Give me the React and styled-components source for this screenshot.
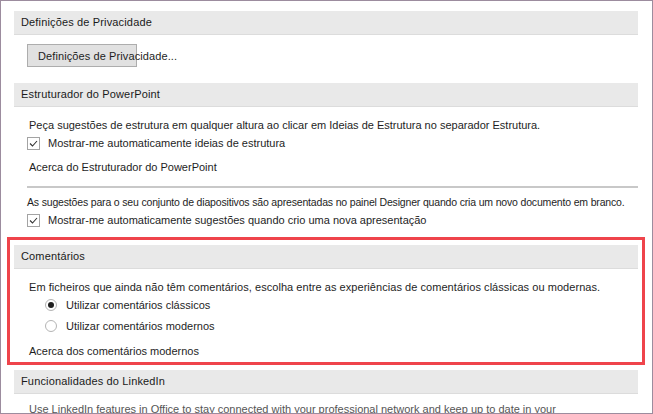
import React from 'react'
import styled, { createGlobalStyle } from 'styled-components'

const GlobalStyle = createGlobalStyle`
    html, body {
        margin: 0;
        padding: 0;
        background: #ffffff;
    }
    body {
        font-family: "Liberation Sans", Arial, sans-serif;
        font-size: 11px;
        color: #1e1e1e;
    }
`

const Window = styled.div`
    box-sizing: border-box;
    width: 653px;
    height: 414px;
    border: 1px solid #9c8c9e;
    background: #ffffff;
    overflow: hidden;
    padding: 10px 14px 0 13px;
`

// Section headers

const SectionHeader = styled.div`
    height: 23px;
    line-height: 23px;
    padding-left: 7px;
    background: #e9e9e9;
    border-bottom: 1px solid #dcdcdc;
    color: #1a1a1a;
    letter-spacing: 0.15px;
    white-space: nowrap;
`

const Body = styled.div`
    display: flex;
    flex-direction: column;
    align-items: flex-start;
    padding: ${ ({ $top }) => $top ?? 9 }px 0 0 ${ ({ $indent }) => $indent ?? 15 }px;
`

const Line = styled.div`
    height: 18px;
    line-height: 18px;
    white-space: nowrap;
    margin-top: ${ ({ $gap }) => $gap || 0 }px;
    letter-spacing: ${ ({ $spread }) => $spread || 0 }px;
    color: ${ ({ $muted }) => $muted ? '#555555' : '#1e1e1e' };
`

const SmallLine = styled(Line)`
    font-size: 10.5px;
    letter-spacing: -0.17px;
    margin-left: -2px;
`

// Button

const PushButton = styled.button`
    box-sizing: border-box;
    width: 110px;
    height: 23px;
    padding: 0 0 0 10px;
    margin: 0 0 16px -2px;
    background: #e1e1e1;
    border: 1px solid #adadad;
    font: inherit;
    letter-spacing: 0.1px;
    color: #1e1e1e;
    text-align: left;
    white-space: nowrap;
    overflow: visible;
`

// Checkboxes and radios

const OptionRow = styled.label`
    display: flex;
    align-items: center;
    height: 18px;
    margin-top: ${ ({ $gap }) => $gap || 0 }px;
    margin-left: ${ ({ $shift }) => $shift || 0 }px;
    white-space: nowrap;
    gap: ${ ({ $space }) => $space || 8 }px;
`

const Box = styled.span`
    box-sizing: border-box;
    width: 13px;
    height: 13px;
    border: 1px solid #a3a3a3;
    background: #ffffff;
    display: flex;
    align-items: center;
    justify-content: center;
`

const Radio = styled.span`
    box-sizing: border-box;
    width: 12px;
    height: 12px;
    border-radius: 50%;
    border: 1px solid #b4b4b4;
    background: #ffffff;
    display: flex;
    align-items: center;
    justify-content: center;
    &::after {
        content: '';
        width: 6px;
        height: 6px;
        border-radius: 50%;
        background: ${ ({ $checked }) => $checked ? '#1f1f1f' : 'transparent' };
    }
`

const Separator = styled.div`
    align-self: stretch;
    height: 2px;
    background: #c8c8c8;
    margin: 10px 0 5px -2px;
`

const Highlight = styled.div`
    box-sizing: border-box;
    margin: 8px -7px 5px -7px;
    border: 3px solid #ef444b;
    padding: 5px 4px 2px 4px;
`

const Checkbox = ({ label, gap, shift }) => (
    <OptionRow $gap={ gap } $shift={ shift }>
        <Box>
            <svg width="9" height="7" viewBox="0 0 9 7">
                <path d="M1 3.5 L3.5 6 L8 1" fill="none" stroke="#333" strokeWidth="1.1" />
            </svg>
        </Box>
        { label }
    </OptionRow>
)

const RadioOption = ({ label, checked, gap }) => (
    <OptionRow $gap={ gap } $shift={ 16 } $space={ 9 }>
        <Radio $checked={ checked } />
        { label }
    </OptionRow>
)

export default function App() {
    return (
        <>
            <GlobalStyle />
            <Window>
                <SectionHeader>Definições de Privacidade</SectionHeader>
                <Body $indent={ 15 }>
                    <PushButton>Definições de Privacidade...</PushButton>
                </Body>

                <SectionHeader>Estruturador do PowerPoint</SectionHeader>
                <Body>
                    <Line>Peça sugestões de estrutura em qualquer altura ao clicar em Ideias de Estrutura no separador Estrutura.</Line>
                    <Checkbox label="Mostrar-me automaticamente ideias de estrutura" shift={ -2 } />
                    <Line $gap={ 6 }>Acerca do Estruturador do PowerPoint</Line>
                    <Separator />
                    <SmallLine>As sugestões para o seu conjunto de diapositivos são apresentadas no painel Designer quando cria um novo documento em branco.</SmallLine>
                    <Checkbox label="Mostrar-me automaticamente sugestões quando crio uma nova apresentação" shift={ -2 } />
                </Body>

                <Highlight>
                    <SectionHeader>Comentários</SectionHeader>
                    <Body>
                        <Line $spread={ 0.05 }>Em ficheiros que ainda não têm comentários, escolha entre as experiências de comentários clássicas ou modernas.</Line>
                        <RadioOption label="Utilizar comentários clássicos" checked />
                        <RadioOption label="Utilizar comentários modernos" gap={ 3 } />
                        <Line $gap={ 7 }>Acerca dos comentários modernos</Line>
                    </Body>
                </Highlight>

                <SectionHeader>Funcionalidades do LinkedIn</SectionHeader>
                <Body $top={ 6 }>
                    <Line $muted>Use LinkedIn features in Office to stay connected with your professional network and keep up to date in your</Line>
                </Body>
            </Window>
        </>
    )
}
